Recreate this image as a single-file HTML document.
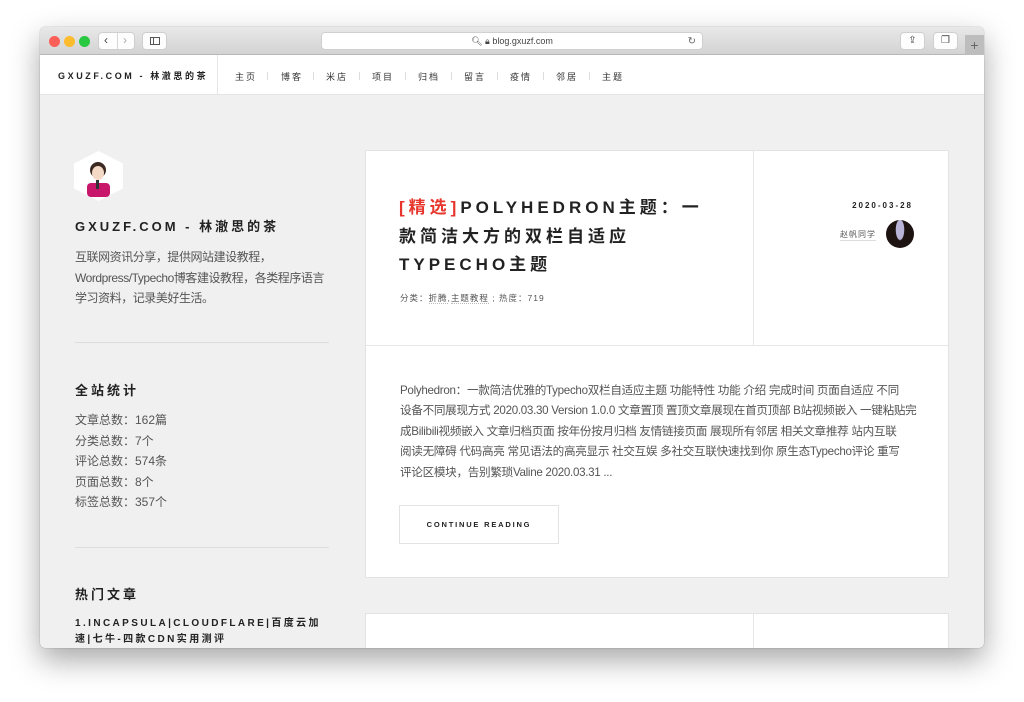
<!DOCTYPE html>
<html><head><meta charset="utf-8"><style>
*{margin:0;padding:0;box-sizing:border-box}
body{width:1024px;height:702px;background:#fff;position:relative;overflow:hidden;font-family:"Liberation Sans","Noto Sans CJK SC",sans-serif;color:#333}
.win{position:absolute;left:40px;top:27px;width:944px;height:621px;border-radius:5px;overflow:hidden;background:#f0f0f0;box-shadow:0 12px 30px rgba(0,0,0,.35),0 0 1px rgba(0,0,0,.4)}
.tb{position:absolute;left:0;top:0;width:944px;height:28px;background:linear-gradient(#e8e8e8,#d3d3d3);border-bottom:1px solid #b8b8b8}
.dot{position:absolute;top:9px;width:11px;height:11px;border-radius:50%}
.btn{position:absolute;top:5px;height:18px;background:#fdfdfd;border:1px solid #cfcfcf;border-radius:4px}
.url{position:absolute;left:281px;top:5px;width:382px;height:18px;background:#fff;border:1px solid #d0d0d0;border-radius:4px;font-size:9px;color:#444;text-align:center;line-height:17px}
.nav{position:absolute;left:0;top:28px;width:944px;height:40px;background:#fff;border-bottom:1px solid #e6e6e6}
.logo{position:absolute;left:18px;top:14px;font-size:9px;font-weight:bold;letter-spacing:2.6px;color:#222}
.vdiv{position:absolute;left:177px;top:0;width:1px;height:40px;background:#e6e6e6}
.mi{position:absolute;top:15px;font-size:9px;letter-spacing:2px;color:#333}
.sep{position:absolute;top:17px;width:1px;height:8px;background:#ddd}
.side{position:absolute;left:35px;white-space:nowrap}
.card{position:absolute;left:325px;width:584px;background:#fff;border:1px solid #e3e3e3}
.h{font-weight:bold;letter-spacing:3px}
</style></head><body>
<div class="win">
 <div class="tb">
  <div class="dot" style="left:9px;background:#fc5f57"></div>
  <div class="dot" style="left:24px;background:#fdbc2e"></div>
  <div class="dot" style="left:39px;background:#28c840"></div>
  <div class="btn" style="left:58px;width:37px"><div style="position:absolute;left:18px;top:0;width:1px;height:16px;background:#d6d6d6"></div><span style="position:absolute;left:5px;top:0;font-size:12px;line-height:15px;color:#444">‹</span><span style="position:absolute;left:24px;top:0;font-size:12px;line-height:15px;color:#aaa">›</span></div>
  <div class="btn" style="left:102px;width:25px"><div style="position:absolute;left:7px;top:4px;width:10px;height:8px;border:1px solid #555"></div><div style="position:absolute;left:10px;top:4px;width:1px;height:8px;background:#555"></div></div>
  <div class="url">🔍︎ 🔒︎ blog.gxuzf.com<span style="position:absolute;right:6px;top:0;color:#666;font-size:10px">↻</span></div>
  <div class="btn" style="left:860px;width:25px;text-align:center;font-size:10px;line-height:16px;color:#444">⇪</div>
  <div class="btn" style="left:893px;width:25px;text-align:center;font-size:10px;line-height:16px;color:#444">❐</div>
  <div style="position:absolute;left:925px;top:8px;width:19px;height:20px;background:#bdbdbd;color:#666;font-size:14px;text-align:center;line-height:20px">+</div>
 </div>
 <div class="nav">
  <div class="logo">GXUZF.COM - 林澈思的茶</div>
  <div class="vdiv"></div>
  <span class="mi" style="left:195px">主页</span><div class="sep" style="left:227px"></div>
  <span class="mi" style="left:241px">博客</span><div class="sep" style="left:273px"></div>
  <span class="mi" style="left:286px">米店</span><div class="sep" style="left:319px"></div>
  <span class="mi" style="left:332px">项目</span><div class="sep" style="left:365px"></div>
  <span class="mi" style="left:378px">归档</span><div class="sep" style="left:411px"></div>
  <span class="mi" style="left:424px">留言</span><div class="sep" style="left:457px"></div>
  <span class="mi" style="left:470px">疫情</span><div class="sep" style="left:503px"></div>
  <span class="mi" style="left:516px">邻居</span><div class="sep" style="left:549px"></div>
  <span class="mi" style="left:562px">主题</span>
 </div>
 <svg style="position:absolute;left:34px;top:124px" width="49" height="50" viewBox="0 0 49 50"><polygon points="24.5,0 49,12.5 49,37.5 24.5,50 0,37.5 0,12.5" fill="#fff"/><circle cx="24" cy="19" r="8" fill="#3a2a22"/><ellipse cx="24" cy="22" rx="6" ry="7" fill="#f4d9c6"/><rect x="13" y="32" width="23" height="14" rx="4" fill="#c8176a"/><rect x="22" y="29" width="3" height="9" fill="#333"/></svg>
 <div class="side h" style="top:189px;font-size:13px;color:#222">GXUZF.COM - 林澈思的茶</div>
 <div class="side" style="top:220px;font-size:12px;line-height:20.5px;color:#555;letter-spacing:-0.45px">互联网资讯分享，提供网站建设教程，<br>Wordpress/Typecho博客建设教程，各类程序语言<br>学习资料，记录美好生活。</div>
 <div class="side" style="top:315px;width:254px;height:1px;background:#ddd"></div>
 <div class="side h" style="top:353px;font-size:13px;color:#222">全站统计</div>
 <div class="side" style="top:383px;font-size:12px;line-height:20.5px;color:#555">文章总数：162篇<br>分类总数：7个<br>评论总数：574条<br>页面总数：8个<br>标签总数：357个</div>
 <div class="side" style="top:520px;width:254px;height:1px;background:#ddd"></div>
 <div class="side h" style="top:557px;font-size:13px;color:#222">热门文章</div>
 <div class="side h" style="top:589px;font-size:10px;line-height:16px;color:#222;letter-spacing:2.4px">1.INCAPSULA|CLOUDFLARE|百度云加<br>速|七牛-四款CDN实用测评</div>
 <div class="card" style="top:123px;height:428px">
  <div style="position:absolute;left:387px;top:0;width:1px;height:194px;background:#e6e6e6"></div>
  <div style="position:absolute;left:0;top:194px;width:582px;height:1px;background:#e6e6e6"></div>
  <div class="h" style="position:absolute;left:33px;top:43px;white-space:nowrap;font-size:17px;line-height:28.5px;color:#222;letter-spacing:4px"><span style="color:#e8352c">[精选]</span>POLYHEDRON主题：一<br>款简洁大方的双栏自适应<br>TYPECHO主题</div>
  <div style="position:absolute;left:34px;top:141px;font-size:8.5px;color:#555;letter-spacing:1px">分类：<span style="border-bottom:1px dotted #bbb">折腾</span>,<span style="border-bottom:1px dotted #bbb">主题教程</span> ; 热度：719</div>
  <div class="h" style="position:absolute;right:35px;top:50px;font-size:8px;color:#222;letter-spacing:2px">2020-03-28</div>
  <div style="position:absolute;left:474px;top:78px;font-size:8px;color:#555;letter-spacing:1px;border-bottom:1px solid #ddd">赵帆同学</div>
  <div style="position:absolute;left:520px;top:69px;width:28px;height:28px;border-radius:50%;background:radial-gradient(ellipse 5px 12px at 50% 35%,#b8b4d8 80%,transparent 90%),#1d1412"></div>
  <div style="position:absolute;left:34px;top:230px;white-space:nowrap;font-size:11.6px;line-height:20.4px;color:#555;letter-spacing:-0.3px">Polyhedron：一款简洁优雅的Typecho双栏自适应主题 功能特性 功能 介绍 完成时间 页面自适应 不同<br>设备不同展现方式 2020.03.30 Version 1.0.0 文章置顶 置顶文章展现在首页顶部 B站视频嵌入 一键粘贴完<br>成Bilibili视频嵌入 文章归档页面 按年份按月归档 友情链接页面 展现所有邻居 相关文章推荐 站内互联<br>阅读无障碍 代码高亮 常见语法的高亮显示 社交互娱 多社交互联快速找到你 原生态Typecho评论 重写<br>评论区模块，告别繁琐Valine 2020.03.31 ...</div>
  <div class="h" style="position:absolute;left:33px;top:354px;width:160px;height:39px;border:1px solid #e3e3e3;font-size:7.5px;line-height:37px;text-align:center;color:#222;letter-spacing:1.8px">CONTINUE READING</div>
 </div>
 <div class="card" style="top:586px;height:60px">
  <div style="position:absolute;left:387px;top:0;width:1px;height:60px;background:#e6e6e6"></div>
 </div>
</div>
</body></html>
